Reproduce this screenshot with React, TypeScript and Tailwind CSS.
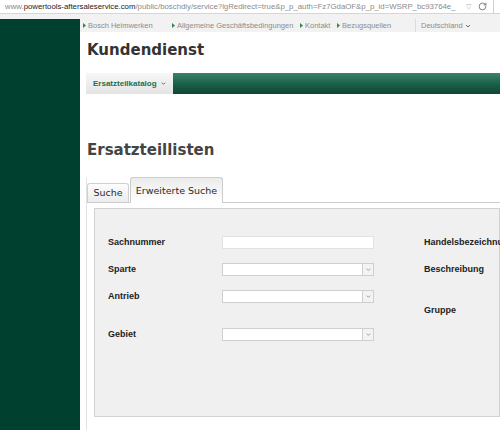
import { FC } from "react";
import { RotateCw } from "lucide-react";

const Bullet: FC = () => (
  <svg width="3" height="5" viewBox="0 0 3 5" className="mr-[2px] shrink-0">
    <path d="M0 0 L3 2.5 L0 5 Z" fill="#2e8a4e" />
  </svg>
);

const Chevron: FC<{ color?: string; size?: number }> = ({ color = "#777", size = 6 }) => (
  <svg width={size} height={size} viewBox="0 0 6 6" className="shrink-0">
    <path d="M1 2 L3 4 L5 2" fill="none" stroke={color} strokeWidth="1" />
  </svg>
);

const SelectBox: FC = () => (
  <div className="flex h-[13px] w-[152px] items-stretch border border-[#cfcfcf] bg-white">
    <div className="flex-1" />
    <div className="flex w-[11px] items-center justify-center border-l border-[#cfcfcf] bg-[#f3f3f3]">
      <Chevron color="#8a8a8a" size={5} />
    </div>
  </div>
);

const navLinks = [
  { label: "Bosch Heimwerken", w: "w-[89px]" },
  { label: "Allgemeine Geschäftsbedingungen", w: "w-[128px]" },
  { label: "Kontakt", w: "w-[37px]" },
  { label: "Bezugsquellen", w: "w-[78px]" },
];

const App: FC = () => {
  return (
    <div className="relative flex h-[430px] w-[500px] flex-col overflow-hidden bg-white font-['Liberation_Sans',Arial,sans-serif]">
      {/* browser address bar */}
      <div className="flex h-[14px] shrink-0 items-center border-b border-[#d6d6d6] bg-white pl-[5px] text-[7.8px]">
        <div className="w-[458px] overflow-hidden whitespace-nowrap leading-[12px] text-[#8a8a8a]">
          www.<span className="text-[#1a1a1a]">powertools-aftersaleservice.com</span>
          /public/boschdiy/service?lgRedirect=true&amp;p_p_auth=Fz7GdaOF&amp;p_p_id=WSRP_bc93764e_
        </div>
        <span className="ml-[3px] text-[7px] leading-none text-[#b0b0b0]">▽</span>
        <RotateCw size={9} strokeWidth={2.2} color="#6a6a6a" className="ml-[7px]" />
        <div className="ml-[6px] h-[14px] border-l border-[#d0d0d0]" />
      </div>
      <div className="h-[5px] shrink-0 bg-[#f2f2f2]" />

      <div className="flex flex-1">
        <aside className="w-[80px] shrink-0 bg-[#00402f]" />

        <main className="min-w-0 flex-1">
          {/* meta nav */}
          <div className="flex h-[13px] items-center bg-[#f2f2f2] pl-[3px] text-[7.5px] leading-none text-[#8d8d8d]">
            {navLinks.map((l) => (
              <div key={l.label} className={`flex items-center whitespace-nowrap ${l.w}`}>
                <Bullet />
                {l.label}
              </div>
            ))}
            <div className="flex h-[13px] items-center gap-[2px] border-l border-[#dcdcdc] pl-[5px]">
              Deutschland
              <Chevron color="#6a6a6a" size={6} />
            </div>
          </div>

          <div className="ml-[6px]">
            <h1 className="mt-[8px] pl-[1px] font-['DejaVu_Sans',Verdana,sans-serif] text-[15px] font-bold leading-[20px] text-[#333]">
              Kundendienst
            </h1>

            {/* main nav */}
            <div className="mt-[13px] flex h-[21px]">
              <div className="flex w-[87px] items-center gap-[4px] bg-gradient-to-b from-[#f7f7f7] to-[#e4e4e4] pl-[7px] text-[8px] font-bold text-[#23704f]">
                Ersatzteilkatalog
                <Chevron color="#23704f" size={5} />
              </div>
              <div className="flex-1 bg-gradient-to-b from-[#3a8469] via-[#1c614a] to-[#0c4735]" />
            </div>

            <h2 className="mt-[46px] pl-[1px] font-['DejaVu_Sans',Verdana,sans-serif] text-[15px] font-bold leading-[20px] text-[#444]">
              Ersatzteillisten
            </h2>

            {/* tabs widget */}
            <div className="mt-[18px] border-l border-[#e2e2e2] pb-[20px]">
              <div className="flex h-[25px] items-end border-b border-[#cccccc] font-['DejaVu_Sans',Verdana,sans-serif] text-[9.5px] text-[#2a2a2a]">
                <div className="flex h-[19px] w-[42px] items-center justify-center rounded-t-[3px] border border-b-0 border-[#d0d0d0] bg-gradient-to-b from-[#fdfdfd] to-[#ececec]">
                  Suche
                </div>
                <div className="-mb-px ml-[1px] flex h-[26px] w-[93px] items-center justify-center rounded-t-[3px] border border-b-0 border-[#cccccc] bg-gradient-to-b from-[#ececec] to-white pt-[1px]">
                  Erweiterte Suche
                </div>
              </div>

              <div className="pl-[7px] pt-[5px]">
                <div className="flex h-[209px] border border-[#d2d2d2] bg-[#f0f0f0] pl-[13px] pt-[20px] text-[9px] font-bold text-[#222]">
                  <div className="flex flex-col">
                    <div className="flex h-[27px] items-center">
                      <span className="w-[114px]">Sachnummer</span>
                      <div className="h-[13px] w-[152px] border border-[#e2e2e2] bg-white" />
                    </div>
                    <div className="flex h-[27px] items-center">
                      <span className="w-[114px]">Sparte</span>
                      <SelectBox />
                    </div>
                    <div className="flex h-[27px] items-center">
                      <span className="w-[114px]">Antrieb</span>
                      <SelectBox />
                    </div>
                    <div className="mt-[11px] flex h-[27px] items-center">
                      <span className="w-[114px]">Gebiet</span>
                      <SelectBox />
                    </div>
                  </div>

                  <div className="ml-[50px] flex flex-col whitespace-nowrap">
                    <div className="flex h-[27px] items-center">Handelsbezeichnung</div>
                    <div className="flex h-[27px] items-center">Beschreibung</div>
                    <div className="mt-[14px] flex h-[27px] items-center">Gruppe</div>
                  </div>
                </div>
              </div>
            </div>
          </div>
        </main>
      </div>
    </div>
  );
};

export default App;
